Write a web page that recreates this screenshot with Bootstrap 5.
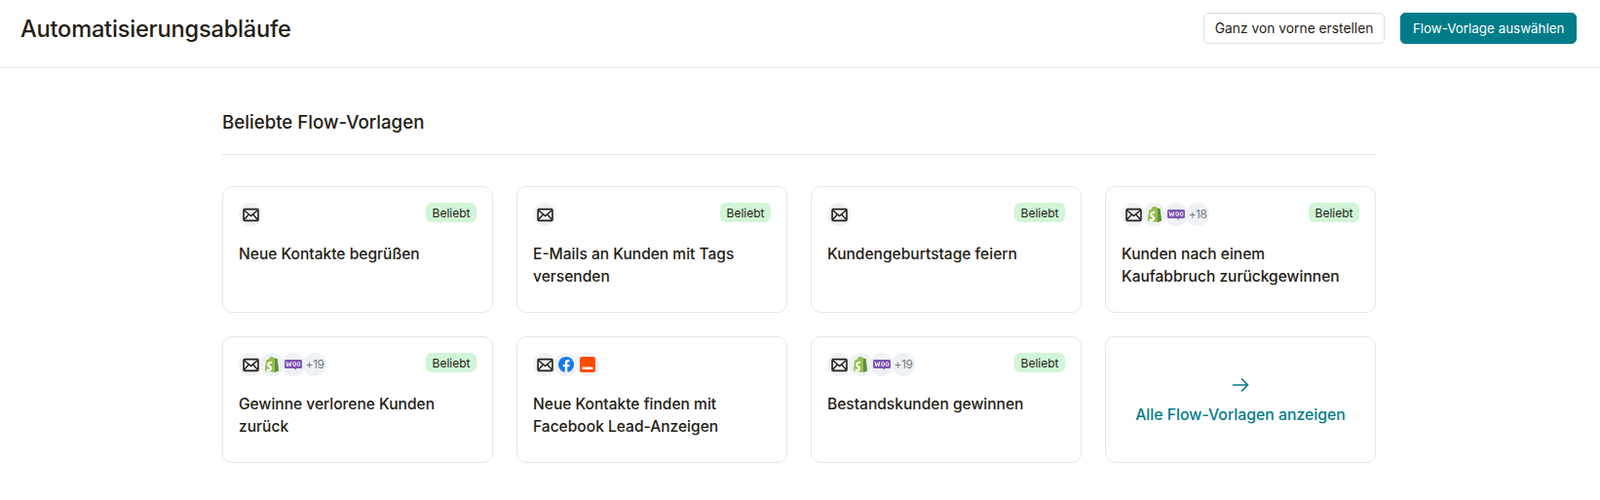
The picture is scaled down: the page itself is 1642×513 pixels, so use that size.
<!DOCTYPE html>
<html lang="de">
<head>
  <meta charset="UTF-8" />
  <title>Automatisierungsabläufe</title>
  <link href="https://cdn.jsdelivr.net/npm/bootstrap@5.3.0/dist/css/bootstrap.min.css" rel="stylesheet"/>
  <style>
    body { font-family: Inter, "Liberation Sans", sans-serif; color: #241c15; background: #fff; }
    .page-head { height: 70px; padding: 0 24px 11px 21px; border-bottom: 1px solid #e3e6e8; }
    .page-title { font-size: 23.6px; font-weight: 500; letter-spacing: -0.2px; margin: 2px 0 0; }
    .btn-plain, .btn-teal { height: 32px; padding: 0 11.5px; border-radius: 5px; line-height: 30px; }
    .btn-plain { font-size: 13.8px; padding: 0 11px; background: #fff; border: 1px solid #d8e0e6; color: #241c15; }
    .btn-teal { font-size: 13.4px; background: #007c89; border: 1px solid #007c89; color: #fff; }
    .btn-teal:hover { background: #006570; color: #fff; }
    .flow-wrap { width: 1186px; margin: 0 auto; padding: 40px 2px 0 0; }
    .flow-heading { font-size: 18.7px; font-weight: 500; line-height: 32px; margin: 0; padding-bottom: 16px; border-bottom: 1px solid #e3e6e8; }
    .flow-grid { display: grid; grid-template-columns: repeat(4, 278px); grid-auto-rows: 130px; gap: 24px; margin-top: 32px; }
    .flow-card { border: 1px solid #e3e8ec; border-radius: 10px; padding: 16px; background: #fff; }
    .flow-text { font-size: 15.55px; font-weight: 500; line-height: 23px; margin: 16.5px 0 0; }
    .icon-dot { width: 24px; height: 24px; border-radius: 50%; background: #eff2f5; display: flex; align-items: center; justify-content: center; margin-left: -2px; font-size: 12px; letter-spacing: -0.5px; color: #727c82; }
    .icon-dot:first-child { margin-left: 0; }
    .tag-popular { height: 20px; line-height: 21px; padding: 0 6.5px; border-radius: 6px; background: #d1f5d7; color: #241c15; font-size: 12px; font-weight: 400; }
    .all-card { color: #007c89; text-decoration: none; font-size: 15.8px; font-weight: 500; }
    .all-card:hover { color: #006570; }
    .all-card svg { margin-top: 2px; margin-bottom: 1px; }
  </style>
</head>
<body>
  <svg width="0" height="0" class="d-block">
    <symbol id="i-mail" viewBox="0 0 16 16">
      <rect x="1" y="2.500" width="14" height="11" rx="1" fill="none" stroke="#241c15" stroke-width="1.500"/>
      <path d="M1.500 3.500 8 9l6.500-5.500M1.500 12.500 6 7.500M14.500 12.500 10 7.500" fill="none" stroke="#241c15" stroke-width="1.300"/>
    </symbol>
    <symbol id="i-shop" viewBox="0 0 16 18">
      <path d="M2.200 4.600 4.600 3.800C5 2 6.300.6 7.800.7c.5 0 .8.3 1 .6.5 0 1 .2 1.300.8l.8-.2 1.200 1.200 1.500.2L15 15.600 9.900 17 .7 15.200Z" fill="#95bf47"/>
      <path d="M11 2.900v14l4-1.400-1.400-12.400-1.500-.2Z" fill="#5e8e3e"/>
      <path d="M8.400 6.300 7.800 8.100s-.7-.3-1.400-.2c-1.200.1-1.200.8-1.200 1 .1 1 2.800 1.300 3 3.700.1 1.900-1 3.200-2.700 3.300-2 .1-3-1-3-1l.4-1.800s1.100.8 1.900.8c.6 0 .8-.5.800-.8-.1-1.300-2.300-1.300-2.400-3.500-.1-1.900 1.100-3.700 3.800-3.900 1-.1 1.500.2 1.500.2Z" fill="#fff"/>
    </symbol>
    <symbol id="i-fb" viewBox="0 0 16 16">
      <circle cx="8" cy="8" r="8" fill="#1877f2"/>
      <path d="M11.100 10.300 11.500 8H9.300V6.500c0-.6.300-1.200 1.300-1.200h1V3.300s-.9-.2-1.800-.2C8 3.100 6.800 4.300 6.800 6.300V8h-2v2.300h2V16h2.500v-5.700Z" fill="#fff"/>
    </symbol>
    <symbol id="i-lead" viewBox="0 0 16 16">
      <rect width="16" height="16" rx="2.500" fill="#fc4c02"/>
      <rect x="2.500" y="10.500" width="11" height="2.500" fill="#fff"/>
    </symbol>
    <symbol id="i-woo" viewBox="0 0 18 11">
      <path d="M1.500 0h15A1.500 1.500 0 0 1 18 1.500v6A1.500 1.500 0 0 1 16.500 9H11.500l.8 2-2.800-2H1.500A1.500 1.500 0 0 1 0 7.500v-6A1.500 1.500 0 0 1 1.500 0Z" fill="#7f54b3"/>
      <path d="M2 2.200l1 4.600 1.500-3.400 1.300 3.400 1-4.600" fill="none" stroke="#fff" stroke-width="1"/>
      <ellipse cx="10.200" cy="4.600" rx="1.400" ry="1.900" fill="none" stroke="#fff" stroke-width="1"/>
      <ellipse cx="14.500" cy="4.600" rx="1.400" ry="1.900" fill="none" stroke="#fff" stroke-width="1"/>
    </symbol>
  </svg>

  <header class="page-head d-flex align-items-center justify-content-between">
    <h1 class="page-title">Automatisierungsabläufe</h1>
    <div class="d-flex gap-3">
      <a href="#" class="btn btn-plain">Ganz von vorne erstellen</a>
      <a href="#" class="btn btn-teal">Flow-Vorlage auswählen</a>
    </div>
  </header>

  <main class="flow-wrap">
    <h2 class="flow-heading">Beliebte Flow-Vorlagen</h2>
    <div class="flow-grid" id="flowGrid"></div>
  </main>

  <script>
    const icons = {
      mail: '<svg width="17" height="17"><use href="#i-mail"/></svg>',
      shop: '<svg width="16" height="18"><use href="#i-shop"/></svg>',
      woo: '<svg width="18" height="11"><use href="#i-woo"/></svg>',
      fb: '<svg width="16" height="16"><use href="#i-fb"/></svg>',
      lead: '<svg width="16" height="16"><use href="#i-lead"/></svg>'
    };

    const flows = [
      { icons: ["mail"], title: "Neue Kontakte begrüßen", popular: true },
      { icons: ["mail"], title: "E-Mails an Kunden mit Tags versenden", popular: true },
      { icons: ["mail"], title: "Kundengeburtstage feiern", popular: true },
      { icons: ["mail", "shop", "woo"], more: 18, title: "Kunden nach einem Kaufabbruch zurückgewinnen", popular: true },
      { icons: ["mail", "shop", "woo"], more: 19, title: "Gewinne verlorene Kunden zurück", popular: true },
      { icons: ["mail", "fb", "lead"], title: "Neue Kontakte finden mit Facebook Lead-Anzeigen", popular: false },
      { icons: ["mail", "shop", "woo"], more: 19, title: "Bestandskunden gewinnen", popular: true }
    ];

    const grid = document.getElementById("flowGrid");

    flows.forEach(flow => {
      const dots = flow.icons.map(name => `<span class="icon-dot">${icons[name]}</span>`).join("");
      const more = flow.more ? `<span class="icon-dot">+${flow.more}</span>` : "";
      const tag = flow.popular ? '<span class="tag-popular">Beliebt</span>' : "";
      grid.innerHTML += `
        <div class="flow-card">
          <div class="d-flex justify-content-between align-items-start">
            <div class="d-flex">${dots}${more}</div>
            ${tag}
          </div>
          <p class="flow-text">${flow.title}</p>
        </div>`;
    });

    grid.innerHTML += `
      <a href="#" class="flow-card all-card d-flex flex-column align-items-center justify-content-center gap-2">
        <svg width="20" height="20" viewBox="0 0 20 20"><path d="M2 10h15M11 3.500 17.500 10 11 16.500" fill="none" stroke="#007c89" stroke-width="1.700"/></svg>
        <span>Alle Flow-Vorlagen anzeigen</span>
      </a>`;
  </script>
  <script src="https://cdn.jsdelivr.net/npm/bootstrap@5.3.0/dist/js/bootstrap.bundle.min.js"></script>
</body>
</html>
